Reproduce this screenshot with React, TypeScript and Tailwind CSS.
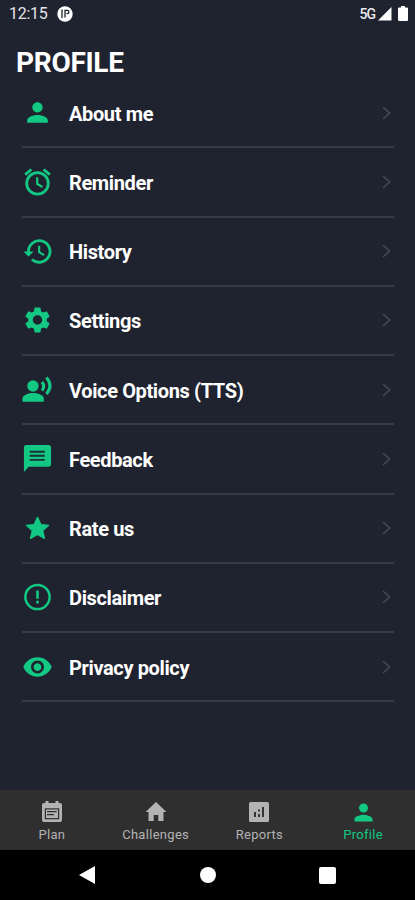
import type { ReactNode } from "react";
import { MdPerson, MdSettings, MdVisibility } from "react-icons/md";

function AlarmIcon() {
  return (
    <svg width="32" height="32" viewBox="0 0 32 32" fill="none" stroke="currentColor">
      <circle cx="16" cy="17.500" r="11.100" strokeWidth="2.900" />
      <path d="M3.300 8.500 9.700 3.100M28.700 8.500 22.300 3.100" strokeWidth="3" />
      <path d="M15.700 11v7l5.400 3.200" strokeWidth="2.300" />
    </svg>
  );
}

function HistoryIcon() {
  return (
    <svg width="32" height="32" viewBox="0 0 32 32" fill="none" stroke="currentColor">
      <path d="M6.700 17A11.100 11.100 0 1 1 10.300 24.700" strokeWidth="2.900" />
      <path d="M1.500 16.500h10.500L6.700 21.800z" fill="currentColor" stroke="none" />
      <path d="M17.700 10.500v6.600l5 3.100" strokeWidth="2.200" />
    </svg>
  );
}

function StarIcon() {
  return (
    <svg width="32" height="32" viewBox="0 0 32 32" fill="currentColor" stroke="currentColor" strokeWidth="1.300" strokeLinejoin="round">
      <path d="m16 5 3.500 7.400 8 .8-6.100 5.500 1.800 8L16 22.700l-7.200 4 1.800-8-6.100-5.500 8-.8z" />
    </svg>
  );
}

function DisclaimerIcon() {
  return (
    <svg width="32" height="32" viewBox="0 0 32 32" fill="none" stroke="currentColor">
      <circle cx="16" cy="16" r="12.500" strokeWidth="2.600" />
      <path d="M16 9.200v8.600M16 19.800v2.800" strokeWidth="2.700" />
    </svg>
  );
}

function VoiceIcon() {
  return (
    <svg width="32" height="32" viewBox="0 0 32 32" fill="currentColor">
      <circle cx="11.300" cy="11.800" r="5.900" />
      <path d="M.5 28v-3.200c0-3.600 6.500-5.600 11-5.600s11 2 11 5.600V28z" />
      <path
        d="M20.600 7.700q3.600 4.400 0 8.800M25.200 3.100q7.400 8.600 0 17"
        fill="none"
        stroke="currentColor"
        strokeWidth="3.200"
      />
    </svg>
  );
}

function FeedbackIcon() {
  return (
    <svg width="32" height="32" viewBox="0 0 32 32">
      <path d="M4.500 1.500h23A2.500 2.500 0 0 1 30 4v17.500a2.500 2.500 0 0 1-2.500 2.500H7l-5 5.500V4a2.500 2.500 0 0 1 2.500-2.500z" fill="currentColor" />
      <path d="M8 8.500h15.500M8 12.700h15.500M8 16.900h15.500" stroke="#1b3038" strokeWidth="2" />
    </svg>
  );
}

function PlanIcon() {
  return (
    <svg width="24" height="24" viewBox="0 0 24 24">
      <path d="M4 3h1.500V1h3v2h7V1h3v2H20a2 2 0 0 1 2 2v15a2 2 0 0 1-2 2H4a2 2 0 0 1-2-2V5a2 2 0 0 1 2-2z" fill="currentColor" />
      <path d="M4.800 8.300h14.400v11H4.800z" fill="#2f2f2f" />
      <path d="M6 9.500h12v8.600H6z" fill="currentColor" />
      <path d="M7 11.700h9.700M7 14.700h7" stroke="#2f2f2f" strokeWidth="1.300" />
    </svg>
  );
}

function HomeIcon() {
  return (
    <svg width="24" height="24" viewBox="0 0 24 24" fill="currentColor">
      <path d="M12 2 1.500 12h3v9h5.200v-6h4.600v6h5.200v-9h3z" />
    </svg>
  );
}

function ReportsIcon() {
  return (
    <svg width="24" height="24" viewBox="0 0 24 24">
      <rect x="2" y="2" width="20" height="20" rx="1.500" fill="currentColor" />
      <path d="M8 12v5M16 7v10M12 9.500v2M12 14v3" stroke="#343434" strokeWidth="2" />
    </svg>
  );
}

const rows: { label: string; icon: ReactNode }[] = [
  { label: "About me", icon: <MdPerson size={33} /> },
  { label: "Reminder", icon: <AlarmIcon /> },
  { label: "History", icon: <HistoryIcon /> },
  { label: "Settings", icon: <MdSettings size={32} /> },
  { label: "Voice Options (TTS)", icon: <VoiceIcon /> },
  { label: "Feedback", icon: <FeedbackIcon /> },
  { label: "Rate us", icon: <StarIcon /> },
  { label: "Disclaimer", icon: <DisclaimerIcon /> },
  { label: "Privacy policy", icon: <MdVisibility size={32} /> },
];

const tabs: { label: string; icon: ReactNode; active?: boolean }[] = [
  { label: "Plan", icon: <PlanIcon /> },
  { label: "Challenges", icon: <HomeIcon /> },
  { label: "Reports", icon: <ReportsIcon /> },
  { label: "Profile", icon: <MdPerson size={27} />, active: true },
];

export default function App() {
  return (
    <div className="flex h-[900px] w-[415px] flex-col overflow-hidden bg-[#1f232f] font-['Roboto',sans-serif] text-white">
      <header className="flex h-7 shrink-0 items-center pl-[9px] pr-[7px]">
        <span className="text-[16px] leading-7 tracking-[-0.3px] text-[#e4e5e8]">12:15</span>
        <svg className="ml-2.5" width="16" height="16" viewBox="0 0 16 16">
          <circle cx="8" cy="8" r="7.700" fill="#fff" />
          <path d="M5 3.500v8.500" stroke="#1f232f" strokeWidth="1.300" />
          <path d="M8 11.500V4.300h2.200a1.700 1.700 0 0 1 0 3.400H9.500" fill="none" stroke="#1f232f" strokeWidth="1.300" />
        </svg>
        <span className="ml-auto text-[14px] font-medium leading-7 tracking-[-1px] text-[#e8e9eb]">5G</span>
        <svg className="ml-[3px]" width="14" height="14" viewBox="0 0 14 14" fill="#fff">
          <path d="M13.500 0v13.500H0z" />
        </svg>
        <svg className="-mt-0.5 ml-1.5" width="10" height="15" viewBox="0 0 10 15" fill="#fff">
          <path d="M3 0h4v1.500h2a1 1 0 0 1 1 1V14a1 1 0 0 1-1 1H1a1 1 0 0 1-1-1V2.500a1 1 0 0 1 1-1h2z" />
        </svg>
      </header>
      <h1 className="mt-[18px] h-[33px] shrink-0 pl-4 text-[28px] font-bold leading-[33px] tracking-[-0.3px]">PROFILE</h1>
      <main className="flex flex-1 flex-col pl-[22px] pr-[21px]">
        {rows.map(({ label, icon }) => (
          <div key={label} className="flex h-[69.250px] shrink-0 items-center border-b-2 border-[#373b46] pt-0.5">
            <span className="-mt-0.5 flex w-[31px] shrink-0 items-center justify-center text-[#12c882]">{icon}</span>
            <span className="ml-4 text-[20px] font-bold leading-6 tracking-[-0.370px]">{label}</span>
            <svg className="-mt-0.5 ml-auto mr-[3px]" width="9" height="14" viewBox="0 0 9 14" fill="none" stroke="#474a54" strokeWidth="1.600">
              <path d="m1 1 6.500 6L1 13" />
            </svg>
          </div>
        ))}
      </main>
      <nav className="grid h-[60px] shrink-0 grid-cols-4 bg-[#2f2f2f]">
        {tabs.map(({ label, icon, active }) => (
          <div key={label} className={`flex flex-col items-center pt-[10px] ${active ? "text-[#12c882]" : "text-[#b3b3b3]"}`}>
            <span className="flex h-6 items-center justify-center">{icon}</span>
            <span className="mt-[3px] text-[13px] leading-4 tracking-[0.3px]">{label}</span>
          </div>
        ))}
      </nav>
      <footer className="flex h-[50px] shrink-0 items-center justify-between bg-black pl-[79px] pr-[79px]">
        <svg width="17" height="18" viewBox="0 0 17 18" fill="#fff">
          <path d="M16 0v18L0 9z" />
        </svg>
        <span className="size-4 rounded-full bg-white" />
        <span className="size-[17px] rounded-[2px] bg-white" />
      </footer>
    </div>
  );
}
